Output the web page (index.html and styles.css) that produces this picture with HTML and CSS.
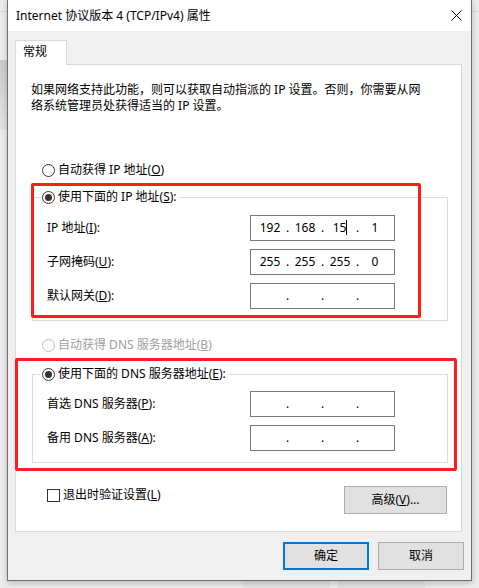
FILE: index.html
```html
<!DOCTYPE html>
<html lang="zh-CN">
<head>
<meta charset="utf-8">
<title>Internet 协议版本 4 (TCP/IPv4) 属性</title>
<link rel="stylesheet" href="styles.css">
</head>
<body>
<div class="window">
  <div class="titlebar">
    <span class="title">Internet 协议版本 4 (TCP/IPv4) 属性</span>
    <svg class="close" width="11" height="11" viewBox="0 0 11 11"><path d="M0.5 0.5L10.5 10.5M10.5 0.5L0.5 10.5" stroke="#000" stroke-width="1" fill="none"/></svg>
  </div>
  <div class="client">
    <div class="tab">常规</div>
    <div class="panel">
      <p class="desc">如果网络支持此功能，则可以获取自动指派的 IP 设置。否则，你需要从网<br>络系统管理员处获得适当的 IP 设置。</p>

      <div class="radio-row first">
        <span class="radio"></span><span>自动获得 IP 地址(<u>O</u>)</span>
      </div>

      <div class="group g-ip">
        <div class="group-head"><span class="radio checked"></span><span>使用下面的 IP 地址(<u>S</u>):</span></div>
        <div class="row r1">
          <span class="lbl">IP 地址(<u>I</u>):</span>
          <div class="ipbox"><span class="seg">192</span><span class="dot">.</span><span class="seg">168</span><span class="dot">.</span><span class="seg">15<span class="caret"></span></span><span class="dot">.</span><span class="seg">1</span></div>
        </div>
        <div class="row">
          <span class="lbl">子网掩码(<u>U</u>):</span>
          <div class="ipbox"><span class="seg">255</span><span class="dot">.</span><span class="seg">255</span><span class="dot">.</span><span class="seg">255</span><span class="dot">.</span><span class="seg">0</span></div>
        </div>
        <div class="row">
          <span class="lbl">默认网关(<u>D</u>):</span>
          <div class="ipbox"><span class="seg"></span><span class="dot">.</span><span class="seg"></span><span class="dot">.</span><span class="seg"></span><span class="dot">.</span><span class="seg"></span></div>
        </div>
      </div>

      <div class="radio-row disabled">
        <span class="radio"></span><span>自动获得 DNS 服务器地址(<u>B</u>)</span>
      </div>

      <div class="group g-dns">
        <div class="group-head"><span class="radio checked"></span><span>使用下面的 DNS 服务器地址(<u>E</u>):</span></div>
        <div class="row r1">
          <span class="lbl">首选 DNS 服务器(<u>P</u>):</span>
          <div class="ipbox"><span class="seg"></span><span class="dot">.</span><span class="seg"></span><span class="dot">.</span><span class="seg"></span><span class="dot">.</span><span class="seg"></span></div>
        </div>
        <div class="row">
          <span class="lbl">备用 DNS 服务器(<u>A</u>):</span>
          <div class="ipbox"><span class="seg"></span><span class="dot">.</span><span class="seg"></span><span class="dot">.</span><span class="seg"></span><span class="dot">.</span><span class="seg"></span></div>
        </div>
      </div>

      <div class="bottom-row">
        <div class="check-row"><span class="checkbox"></span><span>退出时验证设置(<u>L</u>)</span></div>
        <div class="btn adv">高级(<u>V</u>)...</div>
      </div>

      <div class="mark mark-ip"></div>
      <div class="mark mark-dns"></div>
    </div>
    <div class="actions">
      <div class="btn primary">确定</div>
      <div class="btn">取消</div>
    </div>
  </div>
</div>
</body>
</html>
```

FILE: styles.css
```css
* { box-sizing: border-box; }

html, body {
  margin: 0;
  padding: 0;
}

body {
  width: 479px;
  height: 588px;
  overflow: hidden;
  background:
    linear-gradient(#d6d6d6, #d6d6d6) 0 11px / 7px 1px no-repeat,
    linear-gradient(#d6d6d6, #d6d6d6) 472px 11px / 7px 1px no-repeat,
    linear-gradient(#cbcbcb, #e4e4e4) 0 60px / 7px 70px no-repeat,
    linear-gradient(#e2e2e2, #e2e2e2) 243px 581px / 87px 7px no-repeat,
    linear-gradient(#e2e2e2, #e2e2e2) 338px 581px / 87px 7px no-repeat,
    #ececec;
  font: 12px/16px "Noto Sans", "Noto Sans CJK SC", sans-serif;
  color: #000;
}

u { text-decoration: underline; text-underline-offset: 1px; }

.window {
  margin-left: 7px;
  width: 465px;
  border: 1px solid #707070;
  border-top: none;
  background: #f0f0f0;
  box-shadow: 0 2px 6px rgba(0, 0, 0, 0.22);
}

.titlebar {
  height: 31px;
  background: #fff;
  display: flex;
  justify-content: space-between;
  align-items: flex-start;
  padding: 8px 9px 0 8px;
}

.title { line-height: 16px; white-space: nowrap; }

.close { margin-top: 2px; display: block; }

.client {
  padding-top: 9px;
}

.tab {
  position: relative;
  z-index: 1;
  margin-left: 7px;
  width: 52px;
  height: 25px;
  margin-bottom: -1px;
  background: #fff;
  border: 1px solid #d9d9d9;
  border-bottom: none;
  padding: 3px 0 0 7px;
}

.panel {
  position: relative;
  margin-left: 7px;
  width: 447px;
  background: #fff;
  border: 1px solid #d9d9d9;
  padding-bottom: 17px;
}

.desc {
  margin: 17px 0 0 15px;
  white-space: nowrap;
}

.radio-row {
  display: flex;
  align-items: center;
  gap: 3px;
  height: 16px;
  margin-left: 26px;
  white-space: nowrap;
}

.radio-row.first { margin-top: 48px; }

.radio-row.disabled { margin-top: 16px; color: #a0a0a0; }

.radio {
  width: 13px;
  height: 13px;
  flex: none;
  border: 1px solid #333;
  border-radius: 50%;
  background: #fff;
  display: flex;
  align-items: center;
  justify-content: center;
}

.radio.checked::after {
  content: "";
  width: 7px;
  height: 7px;
  border-radius: 50%;
  background: #333;
}

.disabled .radio { border-color: #bcbcbc; }

.group {
  margin-left: 16px;
  width: 416px;
  border: 1px solid #dcdcdc;
  padding: 0 0 11px 14px;
}

.g-ip { margin-top: 19px; }
.g-dns { margin-top: 21px; }

.group-head {
  display: flex;
  align-items: center;
  gap: 3px;
  width: fit-content;
  height: 16px;
  margin: -9px 0 0 -6px;
  padding: 0 2px 0 1px;
  background: #fff;
  white-space: nowrap;
}

.row {
  display: flex;
  align-items: center;
  height: 26px;
  margin-top: 8px;
}

.g-ip .row.r1 { margin-top: 10px; }
.g-dns .row.r1 { margin-top: 9px; }

.lbl {
  width: 203px;
  flex: none;
  white-space: nowrap;
}

.ipbox {
  width: 145px;
  height: 26px;
  border: 1px solid #7a7a7a;
  display: flex;
  padding-left: 5px;
  line-height: 24px;
  background: #fff;
}

.seg {
  width: 28px;
  text-align: center;
  white-space: nowrap;
}

.dot {
  width: 7px;
  text-align: center;
}

.caret {
  display: inline-block;
  width: 1px;
  height: 15px;
  background: #000;
  vertical-align: -3px;
}

.bottom-row {
  display: flex;
  justify-content: space-between;
  align-items: flex-start;
  margin: 23px 14px 0 31px;
}

.check-row {
  display: flex;
  align-items: center;
  gap: 3px;
  height: 16px;
  margin-top: 1px;
  white-space: nowrap;
}

.checkbox {
  width: 13px;
  height: 13px;
  border: 1px solid #333;
  background: #fff;
}

.btn {
  height: 28px;
  width: 86px;
  background: #e1e1e1;
  border: 1px solid #adadad;
  display: flex;
  align-items: center;
  justify-content: center;
  white-space: nowrap;
}

.btn.adv { width: 103px; }

.btn.primary { border: 2px solid #0078d7; }

.actions {
  display: flex;
  justify-content: flex-end;
  gap: 9px;
  padding: 10px 7px 10px 0;
}

.mark {
  position: absolute;
  border: 3px solid #fd1d1d;
  border-radius: 2px;
  pointer-events: none;
}

.mark-ip {
  left: 15px;
  top: 118px;
  width: 390px;
  height: 135px;
}

.mark-dns {
  left: -1px;
  top: 293px;
  width: 442px;
  height: 113px;
}
```
